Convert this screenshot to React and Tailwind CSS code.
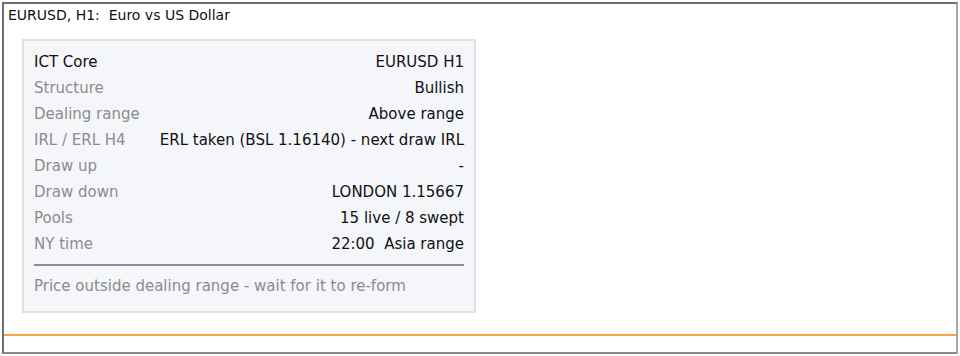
import React from 'react';

const rows = [
  ['Structure', 'Bullish'],
  ['Dealing range', 'Above range'],
  ['IRL / ERL H4', 'ERL taken (BSL 1.16140) - next draw IRL'],
  ['Draw up', '-'],
  ['Draw down', 'LONDON 1.15667'],
  ['Pools', '15 live / 8 swept'],
  ['NY time', '22:00  Asia range'],
];

export default function App() {
  return (
    <div className="w-[960px] h-[356px] bg-white p-[2px] font-['DejaVu_Sans',sans-serif]">
      <div className="h-full flex flex-col border-2 border-l-[#6e6e6e] border-t-[#6e6e6e] border-r-[#a8a8a8] border-b-[#8a8a8a]">
        {/* Chart title */}
        <div className="h-[24px] pl-[4px] pt-[3px] text-[14px] leading-[17px] text-[#111] whitespace-pre">
          EURUSD, H1:  Euro vs US Dollar
        </div>

        {/* Info panel */}
        <div className="ml-[18px] mt-[11px] w-[454px] border-2 border-[#dfe1e4] bg-[#f4f6f9] px-[10px] pt-[8px] pb-[12px] text-[15px]">
          <div className="flex justify-between h-[26px] items-center text-[#111]">
            <span>ICT Core</span>
            <span>EURUSD H1</span>
          </div>
          {rows.map(([label, value]) => (
            <div key={label} className="flex justify-between h-[26px] items-center">
              <span className="text-[#8c8c8c]">{label}</span>
              <span className="text-[#111] whitespace-pre">{value}</span>
            </div>
          ))}
          <div className="mt-[7px] h-[2px] bg-[#8d8d8d]" />
          <div className="mt-[7px] h-[26px] flex items-center text-[#8c8c8c]">
            Price outside dealing range - wait for it to re-form
          </div>
        </div>

        <div className="flex-1" />
        <div className="h-[2px] bg-[#f6a443]" />
        <div className="h-[16px]" />
      </div>
    </div>
  );
}
